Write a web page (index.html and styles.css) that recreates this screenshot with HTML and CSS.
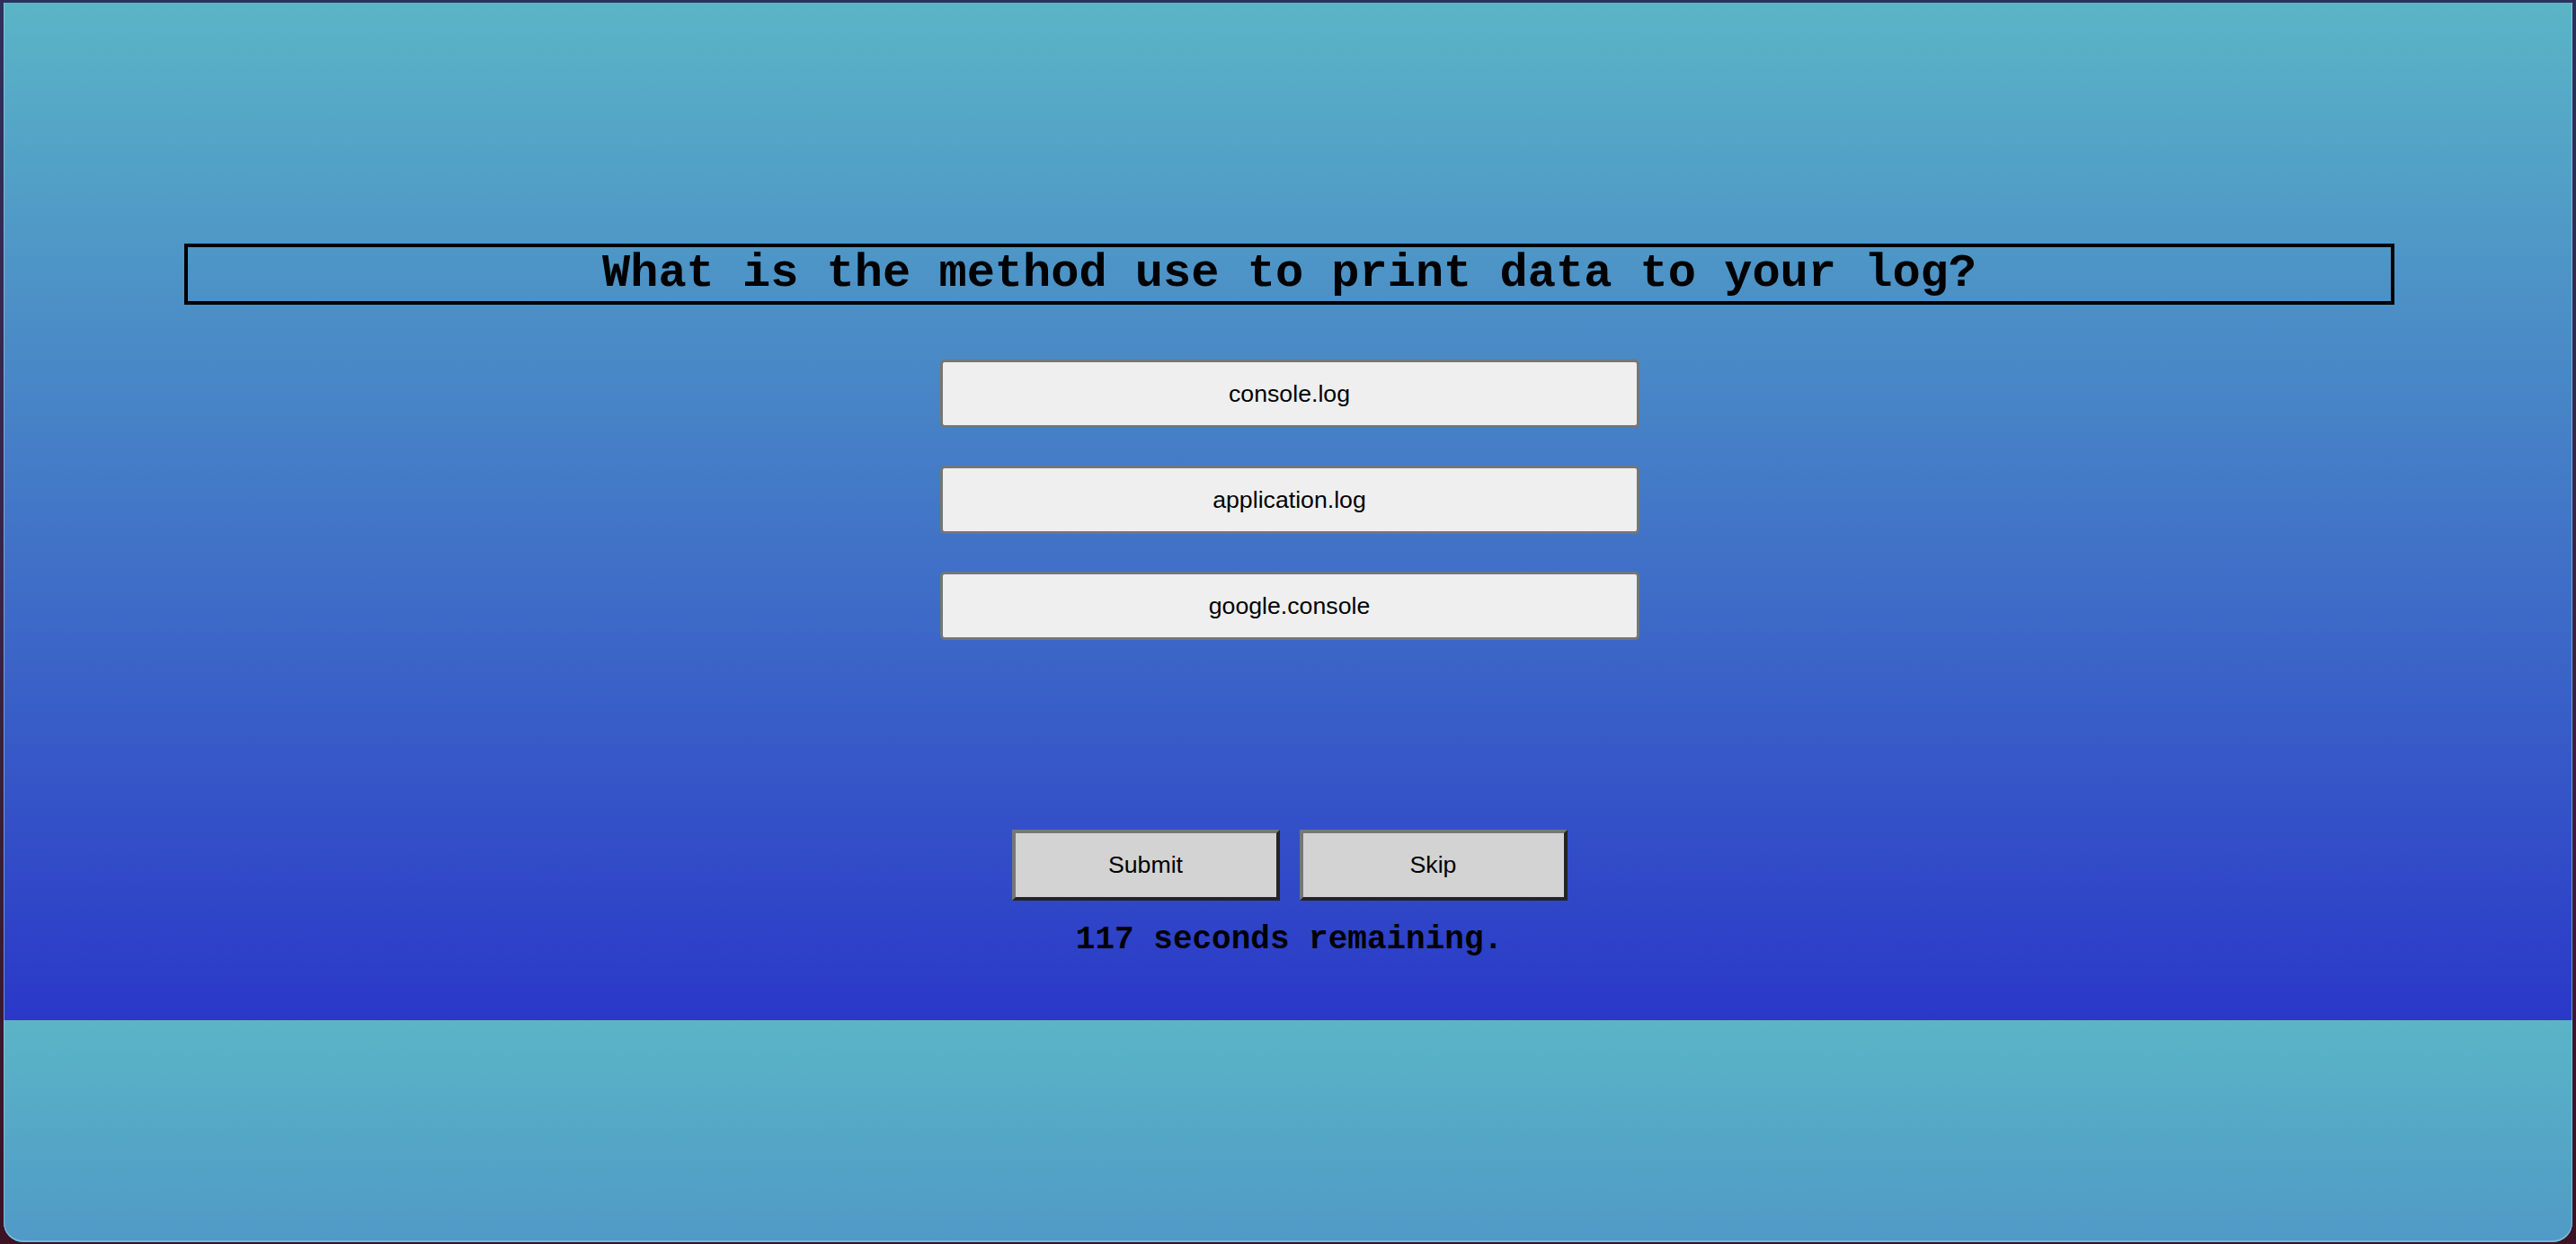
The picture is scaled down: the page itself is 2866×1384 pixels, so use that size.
FILE: index.html
```html
<!DOCTYPE html>
<html lang="en">
<head>
<meta charset="utf-8">
<title>Quiz</title>
<link rel="stylesheet" href="styles.css">
</head>
<body>
<div class="window">
  <main class="quiz">
    <h1 class="question">What is the method use to print data to your log?</h1>
    <div class="answers">
      <button class="answer">console.log</button>
      <button class="answer">application.log</button>
      <button class="answer">google.console</button>
    </div>
    <div class="controls">
      <button class="control">Submit</button>
      <button class="control">Skip</button>
    </div>
    <p class="timer">117 seconds remaining.</p>
  </main>
</div>
</body>
</html>
```

FILE: styles.css
```css
html, body {
  margin: 0;
  padding: 0;
  height: 100%;
}

body {
  background: linear-gradient(180deg, #2e305c 0%, #3a2244 50%, #3c1224 100%);
  box-sizing: border-box;
  padding: 3px 4px 2px 4px;
  display: flex;
}

.window {
  flex: 1;
  position: relative;
  border-radius: 0 0 22px 22px;
  overflow: hidden;
  background-image: linear-gradient(180deg, #5ab5c6 0%, #2a38c8 100%);
  background-size: 100% 1132px;
  background-repeat: repeat-y;
  box-shadow: inset 1px 0 0 rgba(150, 215, 230, 0.6), inset -1px 0 0 rgba(150, 215, 230, 0.6), inset 0 -2px 0 rgba(150, 215, 230, 0.5);
}

.quiz {
  display: flex;
  flex-direction: column;
  align-items: center;
  padding: 268px 198px 0 201px;
}

.question {
  align-self: stretch;
  box-sizing: border-box;
  height: 68px;
  margin: 0;
  border: 4px solid #000;
  display: flex;
  align-items: center;
  justify-content: center;
  font-family: "Liberation Mono", "Courier New", monospace;
  font-weight: bold;
  font-size: 52px;
  line-height: 1;
  color: #000;
}

.answers {
  display: flex;
  flex-direction: column;
  gap: 42px;
  margin-top: 61px;
}

.answer {
  box-sizing: border-box;
  width: 778px;
  height: 76px;
  margin: 0;
  padding: 0;
  background: #efefef;
  border: 3px solid #767676;
  border-radius: 5px;
  font-family: "Liberation Sans", Arial, sans-serif;
  font-size: 26.7px;
  color: #000;
}

.controls {
  display: flex;
  gap: 22px;
  margin-top: 211px;
}

.control {
  box-sizing: border-box;
  width: 298px;
  height: 79px;
  margin: 0;
  padding: 0;
  background: #d3d3d3;
  border-width: 4px;
  border-style: solid;
  border-color: #777 #242424 #242424 #777;
  font-family: "Liberation Sans", Arial, sans-serif;
  font-size: 26.7px;
  color: #000;
}

.timer {
  margin: 24px 0 0 0;
  font-family: "Liberation Mono", "Courier New", monospace;
  font-weight: bold;
  font-size: 36px;
  line-height: 40px;
  color: #000;
}
```
